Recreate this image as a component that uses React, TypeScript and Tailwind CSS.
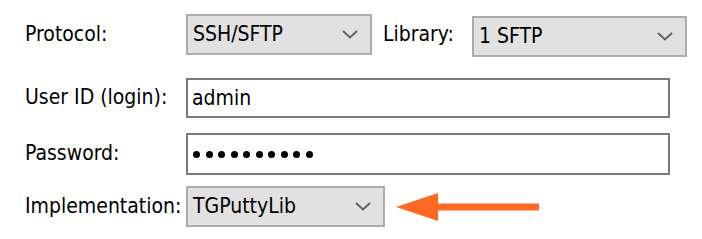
import React from "react";

const font = { fontFamily: '"DejaVu Sans Condensed", "DejaVu Sans", "Liberation Sans", sans-serif' };

function Chevron() {
  return (
    <svg width="16" height="9" viewBox="0 0 16 9" className="shrink-0">
      <polyline points="1,1 8,7.5 15,1" fill="none" stroke="#5f6366" strokeWidth="2" />
    </svg>
  );
}

function Combo({ value, className }: { value: string; className: string }) {
  return (
    <div
      className={`flex items-center justify-between border-2 border-[#adadad] bg-[#e1e1e1] pl-[5px] pr-[12px] text-black ${className}`}
    >
      <span className="leading-none">{value}</span>
      <Chevron />
    </div>
  );
}

export default function App() {
  return (
    <div className="w-[702px] h-[239px] bg-white text-[21px] text-black relative overflow-hidden [font-stretch:condensed]" style={font}>
      <div className="flex flex-col pt-[14px]">
        {/* Row 1 */}
        <div className="flex items-start h-[43px]">
          <div className="w-[186px] pl-[25px] h-[41px] flex items-center">Protocol:</div>
          <Combo value="SSH/SFTP" className="w-[186px] h-[41px]" />
          <div className="ml-[11px] w-[89px] h-[41px] flex items-center">Library:</div>
          <Combo value="1 SFTP" className="w-[215px] h-[41px] mt-[2px]" />
        </div>
        {/* Row 2 */}
        <div className="flex items-center mt-[21px] h-[40px]">
          <div className="w-[186px] pl-[25px]">User ID (login):</div>
          <div className="w-[484px] h-[40px] border-2 border-[#7a7a7a] bg-white flex items-center pl-[4px]">
            <span className="leading-none">admin</span>
          </div>
        </div>
        {/* Row 3 */}
        <div className="flex items-center mt-[15px] h-[42px]">
          <div className="w-[186px] pl-[25px]">Password:</div>
          <div className="w-[484px] h-[42px] border-2 border-[#7a7a7a] bg-white flex items-center pl-[5px] gap-[5.5px]">
            {Array.from({ length: 10 }).map((_, i) => (
              <span key={i} className="block w-[7px] h-[7px] rounded-full bg-black" />
            ))}
          </div>
        </div>
        {/* Row 4 */}
        <div className="flex items-center mt-[11px] h-[41px]">
          <div className="w-[186px] pl-[25px]">Implementation:</div>
          <Combo value="TGPuttyLib" className="w-[199px] h-[41px]" />
          <svg width="144" height="30" viewBox="0 0 144 30" className="ml-[11px]">
            <polygon points="0,15 42,1 42,29" fill="#ff6a22" />
            <rect x="40" y="11.5" width="103" height="7" fill="#ff6a22" />
          </svg>
        </div>
      </div>
    </div>
  );
}
